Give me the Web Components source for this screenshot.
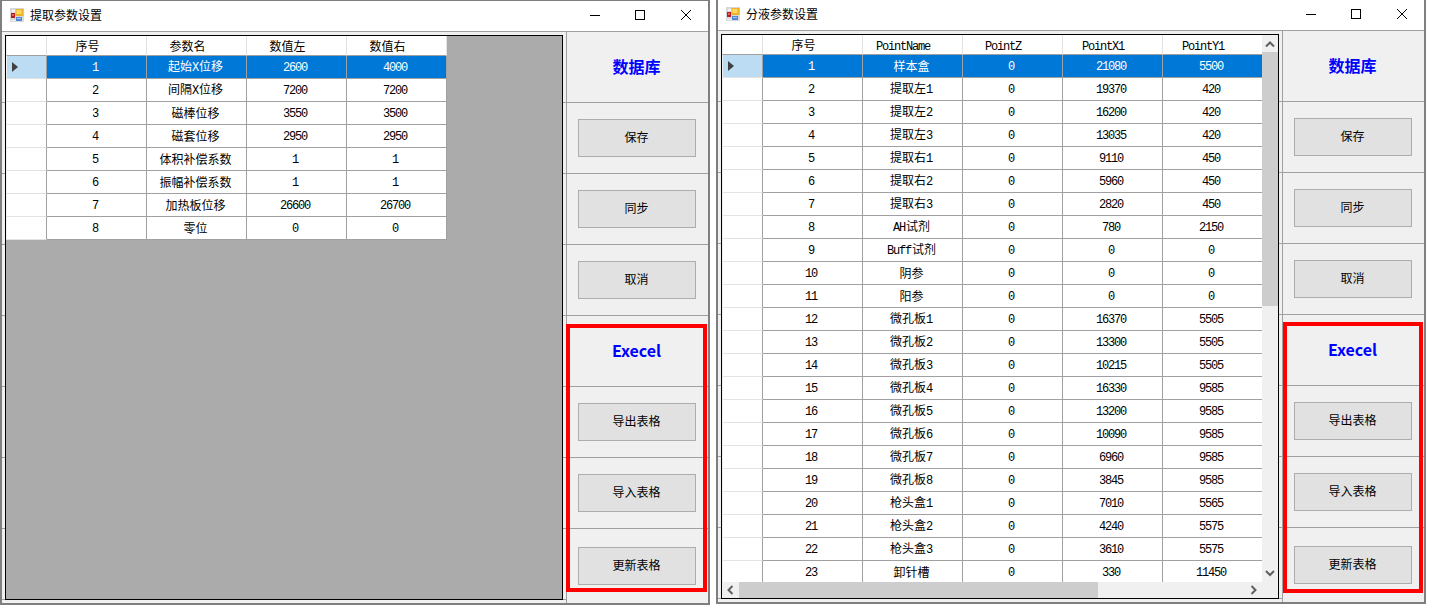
<!DOCTYPE html>
<html lang="zh">
<head>
<meta charset="utf-8">
<title>参数设置</title>
<style>
	html, body { margin: 0; height: 605px; overflow: hidden; background: #fff; }
	body {
		display: flex;
		align-items: flex-start;
		gap: 6px;
		font: 12px "Noto Sans CJK SC", sans-serif;
		color: #000;
	}
</style>
</head>
<body>
	<form-window title-text="提取参数设置" style="--mark-x:566px;--mark-y:324px;--mark-w:141px;--mark-h:268px">
		<data-grid id="extract" slot="grid"></data-grid>
		<panel-cell slot="side"><panel-title>数据库</panel-title></panel-cell>
		<panel-cell slot="side"><panel-button>保存</panel-button></panel-cell>
		<panel-cell slot="side"><panel-button>同步</panel-button></panel-cell>
		<panel-cell slot="side"><panel-button>取消</panel-button></panel-cell>
		<panel-cell slot="side"><panel-title>Execel</panel-title></panel-cell>
		<panel-cell slot="side"><panel-button>导出表格</panel-button></panel-cell>
		<panel-cell slot="side"><panel-button>导入表格</panel-button></panel-cell>
		<panel-cell slot="side"><panel-button>更新表格</panel-button></panel-cell>
	</form-window>
	<form-window title-text="分液参数设置" style="margin-top:-1px;--mark-x:567px;--mark-y:323px;--mark-w:140px;--mark-h:271px">
		<data-grid id="dispense" slot="grid" scrollbars></data-grid>
		<panel-cell slot="side"><panel-title>数据库</panel-title></panel-cell>
		<panel-cell slot="side"><panel-button>保存</panel-button></panel-cell>
		<panel-cell slot="side"><panel-button>同步</panel-button></panel-cell>
		<panel-cell slot="side"><panel-button>取消</panel-button></panel-cell>
		<panel-cell slot="side"><panel-title>Execel</panel-title></panel-cell>
		<panel-cell slot="side"><panel-button>导出表格</panel-button></panel-cell>
		<panel-cell slot="side"><panel-button>导入表格</panel-button></panel-cell>
		<panel-cell slot="side"><panel-button>更新表格</panel-button></panel-cell>
	</form-window>

<script>
class FormWindow extends HTMLElement {
	constructor() {
		super()
		this.attachShadow({ mode: 'open' })
	}

	static get styles() {
		return /* css */ `
		:host {
			display: block;
			position: relative;
			flex: none;
			box-sizing: border-box;
			width: 710px;
			height: 605px;
			background: #fff;
			border: solid #7f7f7f;
			border-width: 1px 2px 2px 2px;
		}
		.title {
			height: 30px;
			display: flex;
			align-items: center;
			padding-left: 8px;
			gap: 6px;
		}
		.title svg { flex: none; }
		.title .icon { margin-bottom: 2px; }
		.title span { margin-bottom: 4px; }
		.controls {
			margin-left: auto;
			display: flex;
		}
		.controls svg { display: block; width: 46px; height: 30px; }
		.client {
			height: 572px;
			box-sizing: border-box;
			border-top: 1px solid #a0a0a0;
			display: grid;
			grid-template-columns: 1fr 142px;
			background: repeating-linear-gradient(to bottom, #f0f0f0 0 70px, #a0a0a0 70px 71px);
		}
		.grid-area { padding: 3px; min-width: 0; min-height: 0; display: flex; }
		.side {
			background: #f0f0f0;
			border-left: 1px solid #a0a0a0;
			display: grid;
			grid-template-rows: repeat(7, 71px) 1fr;
		}
		.mark {
			position: absolute;
			left: calc(var(--mark-x) - 2px);
			top: calc(var(--mark-y) - 1px);
			width: var(--mark-w);
			height: var(--mark-h);
			box-sizing: border-box;
			border: 4px solid #f00;
			pointer-events: none;
		}
		`
	}

	connectedCallback() {
		this.shadowRoot.innerHTML = /* html */ `
		<style>${FormWindow.styles}</style>
		<div class="title">
			<svg class="icon" width="14" height="14" viewBox="0 0 14 14">
				<rect x="0" y="0" width="14" height="14" fill="#d8d8d8"/>
				<rect x="2" y="2" width="3" height="2" fill="#f4f4f4"/>
				<rect x="1" y="12" width="12" height="1" fill="#f0f0f0"/>
				<rect x="5.5" y="1" width="8" height="7" fill="#e9b428"/>
				<rect x="6.5" y="2" width="5" height="4" fill="#ffd860"/>
				<rect x="1" y="5" width="4" height="5" fill="#b71c1c"/>
				<rect x="2" y="6" width="2" height="2" fill="#e86060"/>
				<rect x="6" y="9" width="6" height="4" fill="#4f86d8"/>
				<rect x="7" y="10" width="4" height="1" fill="#a9c8f0"/>
			</svg>
			<span>${this.getAttribute('title-text')}</span>
			<div class="controls">
				<svg viewBox="0 0 46 30"><path d="M20 14.5h10" stroke="#000" fill="none"/></svg>
				<svg viewBox="0 0 46 30"><rect x="19.5" y="9.5" width="9" height="9" stroke="#000" fill="none"/></svg>
				<svg viewBox="0 0 46 30"><path d="M19 9l10 10M29 9l-10 10" stroke="#000" stroke-width="1" fill="none"/></svg>
			</div>
		</div>
		<div class="client">
			<div class="grid-area"><slot name="grid"></slot></div>
			<div class="side"><slot name="side"></slot></div>
		</div>
		<div class="mark"></div>
		`
	}
}

class PanelCell extends HTMLElement {
	constructor() {
		super()
		this.attachShadow({ mode: 'open' })
		this.shadowRoot.innerHTML = /* html */ `
		<style>
			:host {
				display: flex;
				align-items: center;
				justify-content: center;
				box-sizing: border-box;
				padding-right: 1px;
				border-bottom: 1px solid #a0a0a0;
			}
			:host(:last-child) { border-bottom: 0; }
		</style>
		<slot></slot>
		`
	}
}

class PanelTitle extends HTMLElement {
	constructor() {
		super()
		this.attachShadow({ mode: 'open' })
		this.shadowRoot.innerHTML = /* html */ `
		<style>
			:host {
				display: block;
				margin: 0 1px 2px 0;
				color: #00f;
				font: bold 16px "Noto Sans CJK SC", "Noto Sans", sans-serif;
				line-height: 20px;
			}
		</style>
		<slot></slot>
		`
	}
}

class PanelButton extends HTMLElement {
	constructor() {
		super()
		this.attachShadow({ mode: 'open' })
		this.shadowRoot.innerHTML = /* html */ `
		<style>
			:host { display: block; }
			button {
				display: block;
				box-sizing: border-box;
				width: 118px;
				height: 38px;
				padding: 0 1px 4px 0;
				margin: 0;
				background: #e1e1e1;
				border: 1px solid #adadad;
				border-radius: 0;
				font: 12px "Noto Sans CJK SC", sans-serif;
				color: #000;
			}
		</style>
		<button type="button"><slot></slot></button>
		`
	}
}

class DataGrid extends HTMLElement {
	constructor() {
		super()
		this.attachShadow({ mode: 'open' })
	}

	static get styles() {
		return /* css */ `
		:host {
			display: grid;
			grid-template-columns: 1fr auto;
			grid-template-rows: 1fr auto;
			box-sizing: border-box;
			width: 558px;
			height: 565px;
			border: 1px solid #000;
			background: #ababab;
			overflow: hidden;
		}
		.view { overflow: hidden; min-width: 0; min-height: 0; }
		.sheet {
			display: grid;
			justify-content: start;
			align-content: start;
			grid-auto-rows: 23px;
			grid-template-rows: 20px;
		}
		.c {
			box-sizing: border-box;
			display: flex;
			align-items: center;
			justify-content: center;
			padding: 0 2px 2px 0;
			background: #fff;
			border-right: 1px solid #a0a0a0;
			border-bottom: 1px solid #a0a0a0;
			white-space: nowrap;
		}
		.c b {
			font: 12px "Liberation Mono", monospace;
			letter-spacing: -1.2px;
			margin-right: 1px;
		}
		.h { border-right-color: #e3e3e3; padding: 0 18px 0 0; }
		.corner { border-right-color: #e3e3e3; border-left: 1px solid #f0f0f0; }
		.rh { border-bottom-color: #e3e3e3; border-right-color: #a0a0a0; border-left: 1px solid #f0f0f0; }
		.on { background: #0078d7; color: #fff; }
		.rh.on { background: #bcdcf4; color: #000; justify-content: flex-start; padding: 0 0 0 5px; }
		.bar { background: #f0f0f0; display: flex; }
		.bar.v { flex-direction: column; width: 16px; grid-row: 1; grid-column: 2; }
		.bar.x { height: 16px; grid-row: 2; grid-column: 1; }
		.end { background: #f0f0f0; grid-row: 2; grid-column: 2; }
		.bar svg { flex: none; display: block; }
		.bar i { flex: none; background: #cdcdcd; }
		.bar.v i { height: 254px; }
		.bar.x i { width: 359px; }
		.bar span { flex: 1; }
		`
	}

	set data({ columns, rows }) {
		const widths = `41px repeat(${columns.length}, 100px)`
		const text = t => '<span>' + String(t).replace(/[\x21-\x7e]+/g, m => `<b>${m}</b>`) + '</span>'
		let cells = `<div class="c corner"></div>`
		cells += columns.map(c => `<div class="c h">${text(c)}</div>`).join('')
		rows.forEach((row, i) => {
			const on = i === 0 ? ' on' : ''
			const arrow = i === 0 ? `<svg width="7" height="10" viewBox="0 0 7 10"><path d="M0 0l6 5-6 5z" fill="#404040"/></svg>` : ''
			cells += `<div class="c rh${on}">${arrow}</div>`
			cells += [i + 1, ...row].map(v => `<div class="c${on}">${text(v)}</div>`).join('')
		})
		const chev = d => `<svg width="16" height="17" viewBox="0 0 16 17"><path d="${d}" stroke="#606060" stroke-width="2" fill="none"/></svg>`
		const chevX = d => `<svg width="17" height="16" viewBox="0 0 17 16"><path d="${d}" stroke="#606060" stroke-width="2" fill="none"/></svg>`
		const bars = this.hasAttribute('scrollbars') ? /* html */ `
			<div class="bar v">${chev('M4 11.5l4-4 4 4')}<i></i><span></span>${chev('M4 6l4 4 4-4')}</div>
			<div class="bar x">${chevX('M10.5 4l-4 4 4 4')}<i></i><span></span>${chevX('M6.5 4l4 4-4 4')}</div>
			<div class="end"></div>
		` : ''
		this.shadowRoot.innerHTML = /* html */ `
		<style>${DataGrid.styles}</style>
		<div class="view"${bars ? '' : ' style="grid-column:1/3;grid-row:1/3"'}>
			<div class="sheet" style="grid-template-columns:${widths}">${cells}</div>
		</div>
		${bars}
		`
	}
}

customElements.define('form-window', FormWindow)
customElements.define('panel-cell', PanelCell)
customElements.define('panel-title', PanelTitle)
customElements.define('panel-button', PanelButton)
customElements.define('data-grid', DataGrid)

document.getElementById('extract').data = {
	columns: ['序号', '参数名', '数值左', '数值右'],
	rows: [
		['起始X位移', 2600, 4000],
		['间隔X位移', 7200, 7200],
		['磁棒位移', 3550, 3500],
		['磁套位移', 2950, 2950],
		['体积补偿系数', 1, 1],
		['振幅补偿系数', 1, 1],
		['加热板位移', 26600, 26700],
		['零位', 0, 0],
	],
}

document.getElementById('dispense').data = {
	columns: ['序号', 'PointName', 'PointZ', 'PointX1', 'PointY1'],
	rows: [
		['样本盒', 0, 21080, 5500],
		['提取左1', 0, 19370, 420],
		['提取左2', 0, 16200, 420],
		['提取左3', 0, 13035, 420],
		['提取右1', 0, 9110, 450],
		['提取右2', 0, 5960, 450],
		['提取右3', 0, 2820, 450],
		['AH试剂', 0, 780, 2150],
		['Buff试剂', 0, 0, 0],
		['阴参', 0, 0, 0],
		['阳参', 0, 0, 0],
		['微孔板1', 0, 16370, 5505],
		['微孔板2', 0, 13300, 5505],
		['微孔板3', 0, 10215, 5505],
		['微孔板4', 0, 16330, 9585],
		['微孔板5', 0, 13200, 9585],
		['微孔板6', 0, 10090, 9585],
		['微孔板7', 0, 6960, 9585],
		['微孔板8', 0, 3845, 9585],
		['枪头盒1', 0, 7010, 5565],
		['枪头盒2', 0, 4240, 5575],
		['枪头盒3', 0, 3610, 5575],
		['卸针槽', 0, 330, 11450],
	],
}
</script>
</body>
</html>
